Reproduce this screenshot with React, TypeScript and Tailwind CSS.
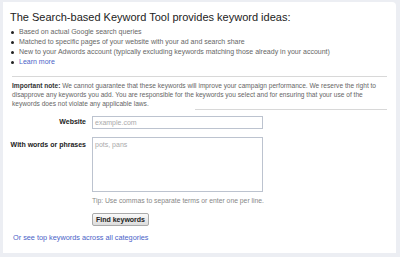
export default function App() {
  return (
    <div className="w-[400px] h-[257px] bg-[#eceef3] pl-[3px] pr-[4px] pt-[2px] pb-[4px] font-['Liberation_Sans',Arial,sans-serif]">
      <div className="h-full bg-white rounded-tr-[4px] px-[7px] pt-[8px] text-[#666]">
        <h1 className="text-[11px] leading-[14px] text-[#222]">
          The Search-based Keyword Tool provides keyword ideas:
        </h1>

        <ul className="mt-[3px] text-[7px] leading-[10px] ml-[1px]">
          <li className="flex items-center gap-[5px]">
            <span className="w-[3px] h-[3px] rounded-full bg-[#222]" />
            Based on actual Google search queries
          </li>
          <li className="flex items-center gap-[5px]">
            <span className="w-[3px] h-[3px] rounded-full bg-[#222]" />
            Matched to specific pages of your website with your ad and search share
          </li>
          <li className="flex items-center gap-[5px]">
            <span className="w-[3px] h-[3px] rounded-full bg-[#222]" />
            New to your Adwords account (typically excluding keywords matching those already in your account)
          </li>
          <li className="flex items-center gap-[5px]">
            <span className="w-[3px] h-[3px] rounded-full bg-[#222]" />
            <span className="text-[#4a63c8]">Learn more</span>
          </li>
        </ul>

        <div className="mt-[9px] mx-[2px] border-t border-[#d8d8d8] pt-[4px] text-[6.6px] leading-[9px]">
          <span className="font-bold text-[#333]">Important note:</span> We cannot guarantee that these keywords will improve your campaign performance. We reserve the right to disapprove any keywords you add. You are responsible for the keywords you select and for ensuring that your use of the keywords does not violate any applicable laws.
        </div>

        <div className="flex justify-end mt-[1px] mr-[2px]">
          <div className="w-[192px] border-t border-[#d8d8d8]" />
        </div>

        <div className="flex items-center mt-[6px]">
          <div className="w-[76px] text-right text-[7px] font-bold text-[#222] whitespace-nowrap">Website</div>
          <div className="ml-[6px] w-[171px] h-[13px] border border-[#bcc3cf] text-[7px] leading-[11px] pl-[2px] text-[#aaa]">
            example.com
          </div>
        </div>

        <div className="flex items-start mt-[8px]">
          <div className="w-[76px] text-right text-[7px] font-bold text-[#222] mt-[3px] whitespace-nowrap">With words or phrases</div>
          <div className="ml-[6px]">
            <div className="w-[171px] h-[55px] border border-[#bcc3cf] text-[7px] leading-[11px] pl-[2px] pt-[1px] text-[#aaa]">
              pots, pans
            </div>
            <div className="mt-[4px] text-[6.8px] leading-[9px] text-[#888]">
              Tip: Use commas to separate terms or enter one per line.
            </div>
            <button className="mt-[7px] h-[13px] px-[3px] border border-[#aaa] rounded-[2px] bg-gradient-to-b from-[#fafafa] to-[#dcdcdc] text-[7px] font-bold text-[#222] leading-[11px]">
              Find keywords
            </button>
          </div>
        </div>

        <div className="mt-[4px] text-[7.3px] text-[#4a63c8] ml-[3px]">
          Or see top keywords across all categories
        </div>
      </div>
    </div>
  );
}
